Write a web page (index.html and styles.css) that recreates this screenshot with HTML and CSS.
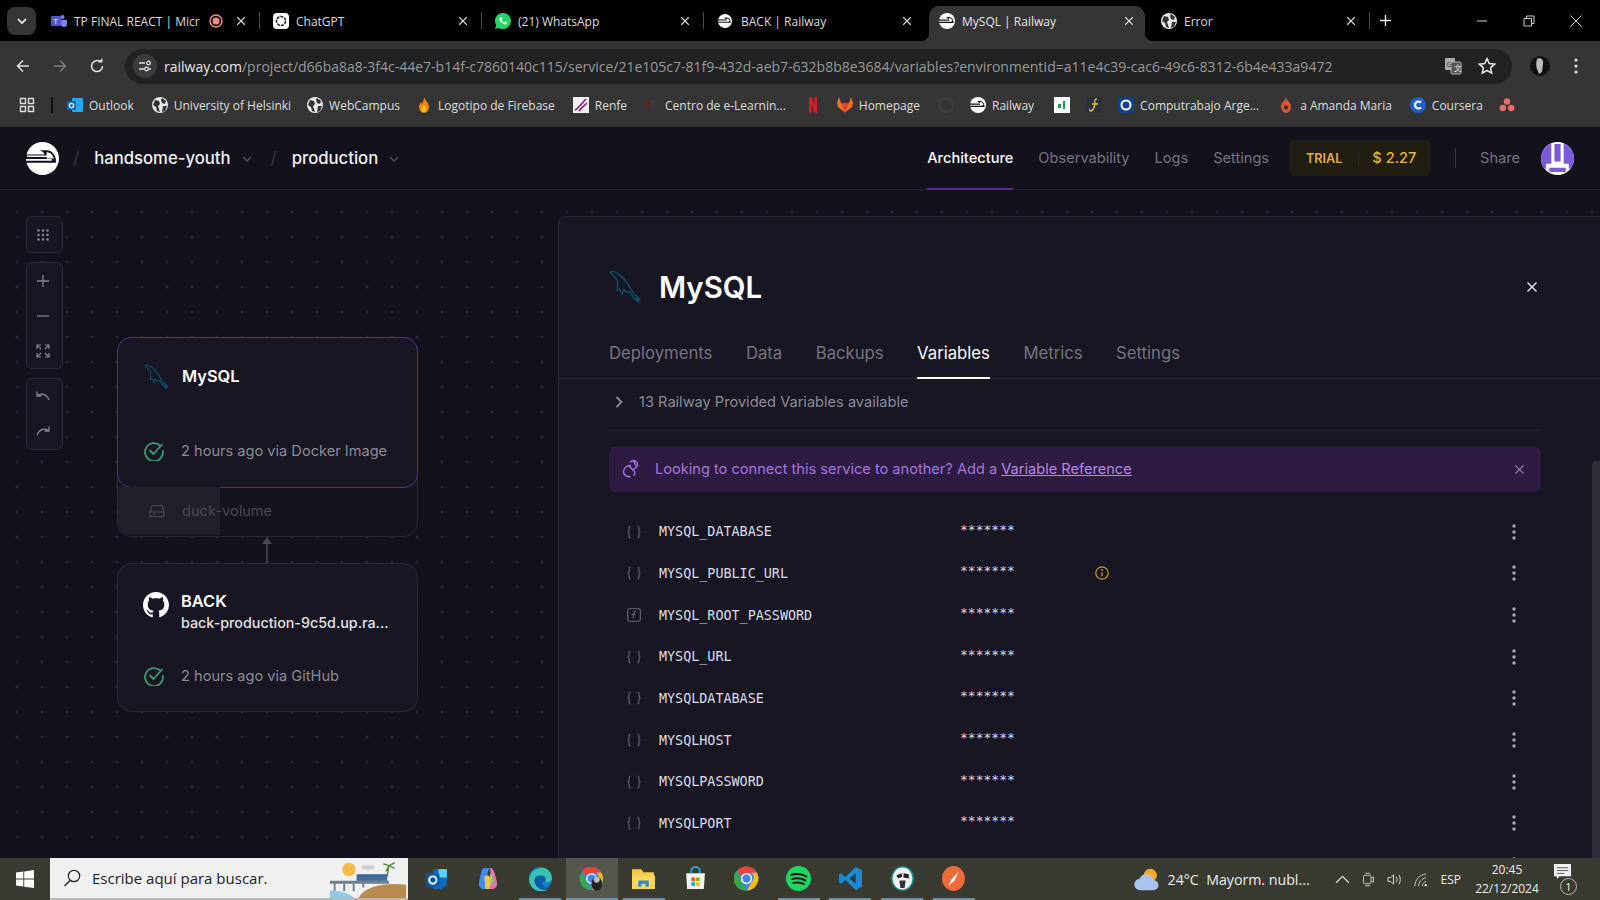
FILE: index.html
```html
<!DOCTYPE html>
<html lang="es">
<head>
    <meta charset="UTF-8">
    <title>MySQL | Railway</title>
    <link rel="stylesheet" href="styles.css">
</head>
<body>
    <svg class="sprites" width="0" height="0">
        <symbol id="globe" viewBox="0 0 16 16">
            <circle cx="8" cy="8" r="8" fill="#e8e8e8"/>
            <path d="M3 3l4 1 1 3-2 2 1 3 1 3-3-1-1-4-3-2zM10 1l4 3-1 3-3-1-1-3zM11 9l4 0-2 5-3 1z" fill="#333"/>
        </symbol>
        <symbol id="rail" viewBox="0 0 32 32">
            <circle cx="16" cy="16" r="16" fill="#fff"/>
            <path d="M0 12h18c-1-3-4-4-6-4h8c4 0 8 3 9 9v3H0z" fill="#13111c"/>
            <path d="M1 13h22v1.6H1zM0 16.5h25v1.6H0zM2 9.5h12v1.6H2z" fill="#fff"/>
            <path d="M20 10c3 0 6 2 7 6h-7z" fill="#fff"/>
        </symbol>
        <symbol id="dolphin" viewBox="0 0 26 26">
            <path d="M1 1.500c3-1.500 5 .5 7 2 3 2.500 5 5 7 8 2 3.500 3 6 5 7.500l4 4-3-1.500 2 3.500-4-3.500c-1-2-2-3.500-3.500-5-1.500 1-3 0-4-1.500l-1.500 3.500-2-4-1.500 1c-.5-3 .5-5 0-7C5 5.500 2.500 3.500 1 1.500z" fill="none" stroke="#0d4f6b" stroke-width="1.100"/>
        </symbol>
        <symbol id="check" viewBox="0 0 20 20">
            <path d="M16.500 4.800A9 9 0 1 0 19 10" fill="none" stroke="#3b9a70" stroke-width="1.800" stroke-linecap="round"/>
            <path d="M6 9.500l3.500 3.500L18 3.500" fill="none" stroke="#3b9a70" stroke-width="1.800" stroke-linecap="round" stroke-linejoin="round"/>
        </symbol>
        <symbol id="braces" viewBox="0 0 14 14">
            <path d="M3.500 1C2 1 2 2 2 3v2.500C2 6.500 1.500 7 .5 7c1 0 1.500.5 1.500 1.500V11c0 1 0 2 1.500 2M10.500 1C12 1 12 2 12 3v2.500c0 1 .5 1.500 1.500 1.500-1 0-1.500.5-1.500 1.500V11c0 1 0 2-1.500 2" fill="none" stroke="#6a6873" stroke-width="1.100"/>
        </symbol>
        <symbol id="dots" viewBox="0 0 4 16">
            <circle cx="2" cy="2" r="1.700" fill="#a9a7b0"/>
            <circle cx="2" cy="8" r="1.700" fill="#a9a7b0"/>
            <circle cx="2" cy="14" r="1.700" fill="#a9a7b0"/>
        </symbol>
        <symbol id="chev" viewBox="0 0 12 12">
            <path d="M2 4l4 4 4-4" fill="none" stroke="#55535e" stroke-width="1.300"/>
        </symbol>
        <symbol id="cross" viewBox="0 0 12 12">
            <path d="M1.500 1.500l9 9M10.500 1.500l-9 9" fill="none" stroke="currentColor" stroke-width="1.300"/>
        </symbol>
    </svg>

    <!-- browser chrome -->
    <div class="tabstrip">
        <div class="tab-menu"><svg width="12" height="12" viewBox="0 0 12 12"><path d="M2 4l4 4 4-4" fill="none" stroke="#fff" stroke-width="1.700"/></svg></div>
        <div class="tab">
            <svg class="fav" viewBox="0 0 16 16"><circle cx="11.500" cy="4" r="2" fill="#7b83eb"/><rect x="0" y="3" width="10" height="10" rx="1" fill="#5059c9"/><path d="M10 7h6v4a3 3 0 0 1-6 0z" fill="#7b83eb"/><text x="2.500" y="11" font-size="8" fill="#fff">T</text></svg>
            <span class="tab-title">TP FINAL REACT | Micr</span>
            <svg class="rec" viewBox="0 0 14 14"><circle cx="7" cy="7" r="6" fill="none" stroke="#f28b82" stroke-width="1.500"/><circle cx="7" cy="7" r="3.500" fill="#f28b82"/></svg>
            <svg class="tab-x"><use href="#cross"/></svg>
        </div>
        <div class="tab">
            <svg class="fav" viewBox="0 0 16 16"><rect width="16" height="16" rx="4" fill="#fff"/><circle cx="8" cy="8" r="4.500" fill="none" stroke="#222" stroke-width="1.600" stroke-dasharray="3 1"/></svg>
            <span class="tab-title">ChatGPT</span>
            <svg class="tab-x"><use href="#cross"/></svg>
        </div>
        <div class="tab">
            <svg class="fav" viewBox="0 0 16 16"><path d="M8 0a8 8 0 0 0-6.800 12.200L0 16l3.900-1.100A8 8 0 1 0 8 0z" fill="#25d366"/><path d="M5 4c-1 1-1 3 1 5s4 3 5.500 2l.5-1.500-2-1-1 1c-1-.5-2-1.500-2.500-2.500l1-1-1-2z" fill="#fff"/></svg>
            <span class="tab-title">(21) WhatsApp</span>
            <svg class="tab-x"><use href="#cross"/></svg>
        </div>
        <div class="tab">
            <svg class="fav fav-sm"><use href="#rail"/></svg>
            <span class="tab-title">BACK | Railway</span>
            <svg class="tab-x"><use href="#cross"/></svg>
        </div>
        <div class="tab tab-active">
            <svg class="fav"><use href="#rail"/></svg>
            <span class="tab-title">MySQL | Railway</span>
            <svg class="tab-x"><use href="#cross"/></svg>
        </div>
        <div class="tab">
            <svg class="fav"><use href="#globe"/></svg>
            <span class="tab-title">Error</span>
            <svg class="tab-x"><use href="#cross"/></svg>
        </div>
        <svg class="new-tab" viewBox="0 0 12 12"><path d="M6 0v12M0 6h12" stroke="#e8e8e8" stroke-width="1.500"/></svg>
        <div class="win-btns">
            <svg viewBox="0 0 12 12"><path d="M1 6h10" stroke="#ccc" stroke-width="1"/></svg>
            <svg viewBox="0 0 12 12"><path d="M1 3.500h7.500V11H1zM3.500 3.500V1H11v7.500H8.500" fill="none" stroke="#ccc" stroke-width="1"/></svg>
            <svg viewBox="0 0 12 12"><path d="M.5.500l11 11M11.500.500l-11 11" stroke="#ccc" stroke-width="1"/></svg>
        </div>
    </div>

    <div class="toolbar">
        <div class="nav-btn"><svg viewBox="0 0 16 16"><path d="M14 8H2.500M8 2.500L2.500 8 8 13.500" fill="none" stroke="#e3e3e3" stroke-width="1.500"/></svg></div>
        <div class="nav-btn"><svg viewBox="0 0 16 16"><path d="M2 8h11.500M8 2.500L13.500 8 8 13.500" fill="none" stroke="#7c7c7c" stroke-width="1.500"/></svg></div>
        <div class="nav-btn"><svg viewBox="0 0 16 16"><path d="M13.500 8A5.500 5.500 0 1 1 11.500 3.800" fill="none" stroke="#e3e3e3" stroke-width="1.500"/><path d="M9 4.500h4.500V0z" fill="#e3e3e3"/></svg></div>
        <div class="omnibox">
            <span class="site-chip"><svg viewBox="0 0 14 14"><path d="M1 4h6M11 10h2M1 10h5" stroke="#e3e3e3" stroke-width="1.300"/><circle cx="10.500" cy="4" r="1.800" fill="none" stroke="#e3e3e3" stroke-width="1.300"/><circle cx="8.500" cy="10" r="1.800" fill="none" stroke="#e3e3e3" stroke-width="1.300"/></svg></span>
            <span class="url"><b>railway.com</b>/project/d66ba8a8-3f4c-44e7-b14f-c7860140c115/service/21e105c7-81f9-432d-aeb7-632b8b8e3684/variables?environmentId=a11e4c39-cac6-49c6-8312-6b4e433a9472</span>
            <svg class="omni-icon" viewBox="0 0 18 18"><rect x="1" y="1" width="10" height="12" rx="1" fill="#aaa"/><rect x="7" y="5" width="10" height="12" rx="1" fill="#555" stroke="#ccc" stroke-width=".8"/><text x="2.500" y="10" font-size="7" fill="#333">G</text><text x="9.500" y="14" font-size="8" fill="#eee">文</text></svg>
            <svg class="omni-icon" viewBox="0 0 16 16"><path d="M8 1.500l2 4.300 4.700.6-3.500 3.200.9 4.700L8 12l-4.100 2.300.9-4.700L1.300 6.400 6 5.800z" fill="none" stroke="#e3e3e3" stroke-width="1.400"/></svg>
        </div>
        <svg class="profile" viewBox="0 0 20 20"><circle cx="10" cy="10" r="10" fill="#111"/><path d="M7 3c3-2 7 0 6 5l-1 8-3 2-2-5c-1-3-1-7 0-10z" fill="#bbb"/></svg>
        <svg class="menu-dots" viewBox="0 0 4 16"><circle cx="2" cy="2" r="1.600" fill="#e3e3e3"/><circle cx="2" cy="8" r="1.600" fill="#e3e3e3"/><circle cx="2" cy="14" r="1.600" fill="#e3e3e3"/></svg>
    </div>

    <div class="bookmarks">
        <svg class="bm-icon" viewBox="0 0 16 16"><path d="M1.500 1.500h5v5h-5zM9.500 1.500h5v5h-5zM1.500 9.500h5v5h-5zM9.500 9.500h5v5h-5z" fill="none" stroke="#ddd" stroke-width="1.400"/></svg>
        <span class="bm-sep"></span>
        <span class="bm bm-first"><svg class="bm-icon" viewBox="0 0 16 16"><rect x="5" y="1" width="11" height="14" rx="1" fill="#28a8ea"/><rect x="0" y="4" width="9" height="9" rx="1" fill="#0f6cbd"/><circle cx="4.500" cy="8.500" r="2.200" fill="none" stroke="#fff" stroke-width="1.200"/></svg>Outlook</span>
        <span class="bm bm-helsinki"><svg class="bm-icon"><use href="#globe"/></svg>University of Helsinki</span>
        <span class="bm"><svg class="bm-icon"><use href="#globe"/></svg>WebCampus</span>
        <span class="bm"><svg class="bm-icon" viewBox="0 0 16 16"><path d="M8 0c1 3 5 6 5 10a5 6 0 0 1-10 0c0-2 1-3 2-5l1 2c1-2 2-4 2-7z" fill="#f5820d"/><path d="M8 8c1 1 2.500 2.500 2.500 4a2.500 3 0 0 1-5 0c0-1.500 1.500-2.500 2.500-4z" fill="#ffc400"/></svg>Logotipo de Firebase</span>
        <span class="bm bm-renfe"><svg class="bm-icon" viewBox="0 0 16 16"><rect width="16" height="16" fill="#eee"/><path d="M2 13C6 11 9 6 13 2M6 14c2-3 5-5 8-8" stroke="#8a1a6b" stroke-width="1.500" fill="none"/></svg>Renfe</span>
        <span class="bm"><svg class="bm-icon" viewBox="0 0 16 16"><rect x="2" y="3" width="5" height="10" fill="#4a2a2a"/><rect x="8" y="3" width="5" height="10" fill="#3a3a3a"/></svg>Centro de e-Learnin...</span>
        <svg class="bm-icon bm-netflix" viewBox="0 0 16 16"><path d="M4 0h3l2.500 9V0H12v16l-3-.5L6.500 7v8.500L4 16z" fill="#d81f26"/></svg>
        <span class="bm"><svg class="bm-icon" viewBox="0 0 16 16"><path d="M8 15.500L1 10l-1-4 2-6 2 6h8l2-6 2 6-1 4z" fill="#fc6d26"/><path d="M8 15.500L4 6h8z" fill="#e24329"/></svg>Homepage</span>
        <svg class="bm-icon bm-github" viewBox="0 0 16 16"><circle cx="8" cy="8" r="7" fill="none" stroke="#3c3e42" stroke-width="2.500"/></svg>
        <span class="bm"><svg class="bm-icon"><use href="#rail"/></svg>Railway</span>
        <svg class="bm-icon bm-sheet" viewBox="0 0 16 16"><rect width="16" height="16" fill="#fff"/><path d="M4 7h3v4H4zM9 4h2v8H9z" fill="#1a9c52"/></svg>
        <svg class="bm-icon" viewBox="0 0 16 16"><rect width="16" height="16" fill="#2a2f3a"/><path d="M11 2C8 2 9 4 9 6c0 3-2 8-4 8-1 0-2-1-1-2M6 7h6" fill="none" stroke="#e8c23a" stroke-width="1.300"/></svg>
        <span class="bm"><svg class="bm-icon" viewBox="0 0 16 16"><rect width="16" height="16" rx="2" fill="#123e8a"/><circle cx="8" cy="8" r="4.500" fill="none" stroke="#fff" stroke-width="2"/></svg>Computrabajo Arge...</span>
        <span class="bm bm-amanda"><svg class="bm-icon" viewBox="0 0 16 16"><path d="M8 0c0 3 5 5 5 10a5 6 0 0 1-10 0c0-5 5-7 5-10z" fill="#e2552b"/><circle cx="8" cy="10.500" r="2.200" fill="#333"/></svg>a Amanda Maria</span>
        <span class="bm bm-coursera"><svg class="bm-icon" viewBox="0 0 16 16"><circle cx="8" cy="8" r="8" fill="#1a5fd0"/><path d="M11 5.500a3.500 3.500 0 1 0 0 5" fill="none" stroke="#fff" stroke-width="2.200"/></svg>Coursera</span>
        <svg class="bm-icon" viewBox="0 0 16 16"><circle cx="8" cy="4.500" r="3.200" fill="#f06a6a"/><circle cx="3.800" cy="11" r="3.200" fill="#f06a6a"/><circle cx="12.200" cy="11" r="3.200" fill="#f06a6a"/></svg>
    </div>

    <!-- railway app -->
    <header class="app-header">
        <svg class="logo"><use href="#rail"/></svg>
        <span class="slash">/</span>
        <span class="crumb">handsome-youth</span>
        <svg class="crumb-chev"><use href="#chev"/></svg>
        <span class="slash">/</span>
        <span class="crumb">production</span>
        <svg class="crumb-chev"><use href="#chev"/></svg>
        <nav class="top-nav">
            <a class="top-link active">Architecture</a>
            <a class="top-link">Observability</a>
            <a class="top-link">Logs</a>
            <a class="top-link">Settings</a>
        </nav>
        <div class="trial"><span class="trial-tag">TRIAL</span><span class="trial-cost">$ 2.27</span></div>
        <span class="head-sep"></span>
        <span class="share">Share</span>
        <svg class="avatar" viewBox="0 0 32 32">
            <clipPath id="avclip"><circle cx="16" cy="16" r="16"/></clipPath>
            <g clip-path="url(#avclip)">
                <rect width="32" height="32" fill="#fff"/>
                <path d="M0 0h10v21H5v5H0zM32 0H22v21h5v5h5zM13 2h6v17h-6zM8 25h16v4H8z" fill="#7b5bd6"/>
            </g>
        </svg>
    </header>

    <main class="canvas">
        <div class="canvas-tools">
            <div class="tool-group">
                <div class="tool"><svg viewBox="0 0 14 14"><g fill="#85838e"><circle cx="2.500" cy="2.500" r="1.300"/><circle cx="7" cy="2.500" r="1.300"/><circle cx="11.500" cy="2.500" r="1.300"/><circle cx="2.500" cy="7" r="1.300"/><circle cx="7" cy="7" r="1.300"/><circle cx="11.500" cy="7" r="1.300"/><circle cx="2.500" cy="11.500" r="1.300"/><circle cx="7" cy="11.500" r="1.300"/><circle cx="11.500" cy="11.500" r="1.300"/></g></svg></div>
            </div>
            <div class="tool-group">
                <div class="tool"><svg viewBox="0 0 14 14"><path d="M7 1v12M1 7h12" stroke="#85838e" stroke-width="1.300"/></svg></div>
                <div class="tool"><svg viewBox="0 0 14 14"><path d="M1 7h12" stroke="#85838e" stroke-width="1.300"/></svg></div>
                <div class="tool"><svg viewBox="0 0 14 14"><path d="M1 5V1h4M1 1l4 4M13 5V1H9M13 1L9 5M1 9v4h4M1 13l4-4M13 9v4H9M13 13L9 9" fill="none" stroke="#85838e" stroke-width="1.200"/></svg></div>
            </div>
            <div class="tool-group">
                <div class="tool"><svg viewBox="0 0 14 14"><path d="M1 1.500v4.500h4.500M1 6c3-3 9-3 12 4" fill="none" stroke="#85838e" stroke-width="1.300"/></svg></div>
                <div class="tool"><svg viewBox="0 0 14 14"><path d="M13 1.500v4.500H8.500M13 6C10 3 4 3 1 10" fill="none" stroke="#85838e" stroke-width="1.300"/></svg></div>
            </div>
        </div>

        <div class="node node-mysql">
            <div class="node-main">
                <div class="node-head">
                    <svg class="node-icon"><use href="#dolphin"/></svg>
                    <div class="node-title">MySQL</div>
                </div>
                <div class="node-status"><svg class="status-icon"><use href="#check"/></svg>2 hours ago via Docker Image</div>
            </div>
            <div class="node-volume">
                <span class="volume-used"></span>
                <svg class="volume-icon" viewBox="0 0 16 16"><path d="M1 9l2-6.500h10L15 9v3.500a1 1 0 0 1-1 1H2a1 1 0 0 1-1-1zM1 9h14M4 11.500h2" fill="none" stroke="#4d4b56" stroke-width="1.200"/></svg>
                <span class="volume-name">duck-volume</span>
            </div>
        </div>

        <svg class="edge" viewBox="0 0 14 26"><path d="M7 6v20" stroke="#4a4852" stroke-width="1.500"/><path d="M7 0l5 7H2z" fill="#4a4852"/></svg>

        <div class="node node-back">
            <div class="node-main">
                <div class="node-head">
                    <svg class="node-icon git-icon" viewBox="0 0 16 16"><path fill="#fff" d="M8 0C3.580 0 0 3.580 0 8c0 3.540 2.290 6.530 5.470 7.590.4.070.55-.17.55-.38 0-.19-.01-.82-.01-1.490-2.010.37-2.530-.49-2.690-.94-.09-.23-.48-.94-.82-1.130-.28-.15-.68-.52-.01-.53.630-.01 1.080.58 1.230.82.720 1.210 1.870.87 2.330.66.070-.52.280-.87.510-1.070-1.780-.2-3.640-.89-3.640-3.950 0-.87.310-1.590.820-2.150-.08-.2-.36-1.020.080-2.120 0 0 .67-.21 2.200.82.640-.18 1.320-.27 2-.27.680 0 1.360.09 2 .27 1.530-1.040 2.200-.82 2.200-.82.440 1.100.160 1.920.080 2.120.510.56.820 1.270.820 2.150 0 3.070-1.870 3.750-3.650 3.950.290.25.540.73.540 1.480 0 1.070-.01 1.930-.01 2.200 0 .21.150.46.550.38A8.013 8.013 0 0016 8c0-4.420-3.580-8-8-8z"/></svg>
                    <div>
                        <div class="node-title">BACK</div>
                        <div class="node-sub">back-production-9c5d.up.ra...</div>
                    </div>
                </div>
                <div class="node-status"><svg class="status-icon"><use href="#check"/></svg>2 hours ago via GitHub</div>
            </div>
        </div>

        <section class="panel">
            <div class="panel-title">
                <svg class="panel-icon"><use href="#dolphin"/></svg>
                <h1>MySQL</h1>
                <svg class="panel-close"><use href="#cross"/></svg>
            </div>
            <div class="panel-tabs">
                <a class="panel-tab">Deployments</a>
                <a class="panel-tab">Data</a>
                <a class="panel-tab">Backups</a>
                <a class="panel-tab active">Variables</a>
                <a class="panel-tab">Metrics</a>
                <a class="panel-tab">Settings</a>
            </div>
            <div class="panel-body">
                <div class="provided">
                    <svg class="provided-chev" viewBox="0 0 12 12"><path d="M3.500 1l5 5-5 5" fill="none" stroke="#8d8b95" stroke-width="1.800"/></svg>
                    13 Railway Provided Variables available
                </div>
                <div class="banner">
                    <svg class="banner-icon" viewBox="0 0 20 20"><path d="M10 6.500C7 6 3 8.500 2.500 12c-.5 3.500 3 6.500 7 5.500M9 3.500c1-2 4-2.500 6-1 2 1.500 2 4 .5 5.500l-3.500 3M8 7l5 5c1.500 1.500 1 3.500-.5 4.500M12 1l3 6" fill="none" stroke="#a46de0" stroke-width="1.500"/></svg>
                    <span>Looking to connect this service to another? Add a <a class="banner-link">Variable Reference</a></span>
                    <svg class="banner-close"><use href="#cross"/></svg>
                </div>
                <div class="var-list">
                    <div class="var-row"><svg class="var-icon"><use href="#braces"/></svg><span class="var-name">MYSQL_DATABASE</span><span class="var-value">*******</span><svg class="var-menu"><use href="#dots"/></svg></div>
                    <div class="var-row"><svg class="var-icon"><use href="#braces"/></svg><span class="var-name">MYSQL_PUBLIC_URL</span><span class="var-value">*******</span><svg class="var-info" viewBox="0 0 14 14"><circle cx="7" cy="7" r="6.200" fill="none" stroke="#c99a2e" stroke-width="1.200"/><path d="M7 6.200v4" stroke="#c99a2e" stroke-width="1.300"/><circle cx="7" cy="4" r=".9" fill="#c99a2e"/></svg><svg class="var-menu"><use href="#dots"/></svg></div>
                    <div class="var-row"><svg class="var-icon" viewBox="0 0 14 14"><rect x=".7" y=".7" width="12.600" height="12.600" rx="1.500" fill="none" stroke="#6a6873" stroke-width="1.100"/><path d="M9 3.500C7.500 3 7 4 6.800 5.500L6 10.500M4.800 6.500h3.600" fill="none" stroke="#6a6873" stroke-width="1.100"/></svg><span class="var-name">MYSQL_ROOT_PASSWORD</span><span class="var-value">*******</span><svg class="var-menu"><use href="#dots"/></svg></div>
                    <div class="var-row"><svg class="var-icon"><use href="#braces"/></svg><span class="var-name">MYSQL_URL</span><span class="var-value">*******</span><svg class="var-menu"><use href="#dots"/></svg></div>
                    <div class="var-row"><svg class="var-icon"><use href="#braces"/></svg><span class="var-name">MYSQLDATABASE</span><span class="var-value">*******</span><svg class="var-menu"><use href="#dots"/></svg></div>
                    <div class="var-row"><svg class="var-icon"><use href="#braces"/></svg><span class="var-name">MYSQLHOST</span><span class="var-value">*******</span><svg class="var-menu"><use href="#dots"/></svg></div>
                    <div class="var-row"><svg class="var-icon"><use href="#braces"/></svg><span class="var-name">MYSQLPASSWORD</span><span class="var-value">*******</span><svg class="var-menu"><use href="#dots"/></svg></div>
                    <div class="var-row"><svg class="var-icon"><use href="#braces"/></svg><span class="var-name">MYSQLPORT</span><span class="var-value">*******</span><svg class="var-menu"><use href="#dots"/></svg></div>
                    <div class="var-row"><svg class="var-icon"><use href="#braces"/></svg><svg class="var-menu"><use href="#dots"/></svg></div>
                </div>
            </div>
            <span class="scroll-thumb"></span>
        </section>
    </main>

    <!-- windows taskbar -->
    <footer class="taskbar">
        <div class="start"><svg viewBox="0 0 16 16"><path d="M0 2.300l6.500-.9v6.200H0zM7.300 1.300L16 0v7.600H7.300zM0 8.400h6.500v6.200L0 13.700zM7.300 8.400H16V16l-8.700-1.200z" fill="#fff"/></svg></div>
        <div class="search">
            <svg class="search-icon" viewBox="0 0 18 18"><circle cx="11" cy="7" r="5.700" fill="none" stroke="#222" stroke-width="1.200"/><path d="M7 11.500L1.500 17" stroke="#222" stroke-width="1.200"/></svg>
            <span class="search-text">Escribe aquí para buscar.</span>
            <svg class="search-art" viewBox="0 0 80 42"><circle cx="20" cy="12" r="7" fill="#f5b94a"/><ellipse cx="40" cy="10" rx="7" ry="2.500" fill="#c9d0d6"/><path d="M60 20l2-12M62 8l-6-2M62 8l6-3M62 8l-3 6M62 8l6 3" stroke="#5f8a3a" stroke-width="1.500"/><path d="M30 42c8-14 30-16 50-14v14z" fill="#b98a4e"/><path d="M0 24h62v3H0zM4 27h2v8H4zM14 27h2v8h-2zM24 27h2v8h-2zM34 27h2v4h-2z" fill="#6f7f8a"/><path d="M28 17h32v7H28z" fill="#3f6c9a"/><path d="M0 34c10 0 18 2 26 8H0z" fill="#8ecae6"/></svg>
        </div>
        <div class="apps">
            <div class="app"><svg viewBox="0 0 24 24"><path d="M9 3h13v15l-5 4H9z" fill="#0f6cbd"/><path d="M14 3h8v8h-8z" fill="#50d9ff"/><rect x="2" y="7" width="13" height="13" rx="2" fill="#0a5aa8"/><circle cx="8.500" cy="13.500" r="3.500" fill="none" stroke="#fff" stroke-width="1.800"/></svg></div>
            <div class="app"><svg viewBox="0 0 24 24"><path d="M8 2h5c-3 5-3 14 0 20H8c-4 0-6-3-5-7l2-9c.5-2 1.500-4 3-4z" fill="#3b8ef0"/><path d="M13 2c3 0 4 2 5 5l2 8c1 4-1 7-5 7h-3c3-6 3-14 1-20z" fill="#e86fb0"/><path d="M8 10c3-2 6 0 7 4l-2 8H9z" fill="#f5c242"/><path d="M14 6l3 8-3 5c-1-4-1-9 0-13z" fill="#8ed16f"/></svg></div>
            <div class="app app-line"><svg viewBox="0 0 24 24"><circle cx="12" cy="12" r="11" fill="#0c7fd0"/><path d="M1 12C2 5 9 1 15 2c5 1 8 5 8 10 0 3-4 4-7 3 2-2 1-6-4-6-5 0-7 4-5 8 2 5 8 7 12 5-3 3-8 3-12 1-4-2-6-6-6-11z" fill="#37c2b1"/><path d="M12 9c-5 0-7 4-5 8 2 5 8 7 12 5 1-1-6-2-6-6 0-1 2-1 3-1 2-2 1-6-4-6z" fill="#0c5aa8"/></svg></div>
            <div class="app app-active"><svg viewBox="0 0 24 24"><circle cx="12" cy="12" r="11" fill="#4285f4"/><path d="M12 1a11 11 0 0 1 9.500 5.500H12a5.500 5.500 0 0 0-5 3L3 4a11 11 0 0 1 9-3z" fill="#ea4335"/><path d="M2.800 5.500L7.500 14.500 12.500 23A11 11 0 0 1 2.800 5.500z" fill="#34a853"/><path d="M21.500 6.500A11 11 0 0 1 12.500 23l4.500-8a5.500 5.500 0 0 0 0-8.500z" fill="#fbbc04"/><circle cx="12" cy="12" r="4.500" fill="#4285f4" stroke="#fff" stroke-width="1.300"/><ellipse cx="17" cy="17" rx="5" ry="7" fill="#222"/><circle cx="17" cy="13" r="3" fill="#bbb"/></svg></div>
            <div class="app app-line"><svg viewBox="0 0 24 24"><path d="M1 3h9l2 3h10v16H1z" fill="#f7c94b"/><path d="M1 9h22v13H1z" fill="#fbd75b"/><path d="M7 20v-6h10v6h-3v-3h-4v3z" fill="#2b8ad6"/></svg></div>
            <div class="app"><svg viewBox="0 0 24 24"><path d="M3 7h18l-1 15H4z" fill="#f4f4f4"/><path d="M8 7V4a4 3 0 0 1 8 0v3" fill="none" stroke="#2aa0d8" stroke-width="1.800"/><path d="M8 11h3.500v3.500H8z" fill="#f25022"/><path d="M12.500 11H16v3.500h-3.500z" fill="#7fba00"/><path d="M8 15.500h3.500V19H8z" fill="#00a4ef"/><path d="M12.500 15.500H16V19h-3.500z" fill="#ffb900"/></svg></div>
            <div class="app"><svg viewBox="0 0 24 24"><circle cx="12" cy="12" r="11.500" fill="#4285f4"/><path d="M12 .5A11.500 11.500 0 0 1 22 6.500H12a5.500 5.500 0 0 0-5 3L3 4A11.500 11.500 0 0 1 12 .5z" fill="#ea4335"/><path d="M3 4l4.500 10.500 5 9A11.500 11.500 0 0 1 3 4z" fill="#34a853"/><path d="M22 6.500a11.500 11.500 0 0 1-9.500 17l4.500-8.500a5.500 5.500 0 0 0 0-8.500z" fill="#fbbc04"/><circle cx="12" cy="12" r="4.700" fill="#4285f4" stroke="#fff" stroke-width="1.300"/></svg></div>
            <div class="app app-line"><svg viewBox="0 0 24 24"><circle cx="12" cy="12" r="12" fill="#1ed760"/><path d="M5 8.500c5-1.500 10-1 14.500 1.500M6 12.500c4-1 9-.8 12.500 1.300M7 16.200c3.500-.8 7-.5 10 1" fill="none" stroke="#111" stroke-width="1.900" stroke-linecap="round"/></svg></div>
            <div class="app app-line"><svg viewBox="0 0 24 24"><path d="M17 1l6 3v16l-6 3L7 13.500 3 17l-2-1V8l2-1 4 3.500zM17 7l-6 5 6 5z" fill="#1a8ad4"/></svg></div>
            <div class="app app-line"><svg viewBox="0 0 24 24"><ellipse cx="12" cy="12" rx="11" ry="12" fill="#1b8c8c"/><ellipse cx="12" cy="12" rx="9.500" ry="10.500" fill="#f0f0f0"/><path d="M6 9l5-2 1 3-4 2zM13 7l5 1v4l-5-1z" fill="#222"/><path d="M9 14h6l-1 7h-4z" fill="#333"/></svg></div>
            <div class="app app-line"><svg viewBox="0 0 24 24"><ellipse cx="12" cy="12" rx="11" ry="12" fill="#f26b3a"/><path d="M7 19l3-6 7-8-4 9z" fill="#fff"/></svg></div>
        </div>
        <div class="tray">
            <svg class="weather" viewBox="0 0 34 30"><circle cx="21" cy="10" r="8" fill="#f5a623"/><path d="M9 28a7 7 0 0 1-1-14 9 9 0 0 1 17 2 6 6 0 0 1 0 12z" fill="#a8c4ea"/></svg>
            <span class="weather-text">24°C&nbsp; Mayorm. nubl...</span>
            <svg class="tray-icon tray-caret" viewBox="0 0 14 14"><path d="M1 10l6-6 6 6" fill="none" stroke="#ddd" stroke-width="1.100"/></svg>
            <svg class="tray-icon" viewBox="0 0 14 18"><rect x="1" y="4" width="9" height="10" rx="1.500" fill="none" stroke="#ddd"/><path d="M10 7l3-1v6l-3-1M3 1.500h6M3 16.500h6" fill="none" stroke="#ddd"/></svg>
            <svg class="tray-icon" viewBox="0 0 16 16"><path d="M1 6h3l3-3v10l-3-3H1zM10 5c1 2 1 4 0 6M13 3c1.500 3 1.500 7 0 10" fill="none" stroke="#ddd"/></svg>
            <svg class="tray-icon" viewBox="0 0 16 16"><path d="M2 15c0-7 5-12 12-13M6 15c0-4 3-8 8-9M10 15c0-2 1-4 4-5" fill="none" stroke="#ccc"/><circle cx="13.500" cy="14" r="1.300" fill="#ddd"/></svg>
            <span class="tray-lang">ESP</span>
            <div class="clock"><span>20:45</span><span>22/12/2024</span></div>
            <div class="notif">
                <svg viewBox="0 0 18 16"><path d="M0 0h18v13H6l-3 3v-3H0z" fill="#f0f0f0"/><path d="M3 4h12M3 7h12M3 10h8" stroke="#555"/></svg>
                <span class="notif-count">1</span>
            </div>
        </div>
    </footer>
</body>
</html>
```

FILE: styles.css
```css
* {
    box-sizing: border-box;
}

html, body {
    margin: 0;
    padding: 0;
}

body {
    width: 1600px;
    height: 900px;
    overflow: hidden;
    display: flex;
    flex-direction: column;
    font-family: 'Inter', 'Liberation Sans', sans-serif;
    background: #13111c;
}

svg {
    display: block;
    flex-shrink: 0;
}

.sprites {
    position: absolute;
}

/* browser tabs */
.tabstrip {
    height: 41px;
    background: #000;
    display: flex;
    align-items: flex-end;
    font-family: 'Open Sans', 'Liberation Sans', sans-serif;
    font-size: 12px;
    color: #dcdcdc;
}

.tab-menu {
    width: 29px;
    height: 28px;
    margin: 0 2px 6px 7px;
    border-radius: 8px;
    background: #353535;
    display: flex;
    align-items: center;
    justify-content: center;
}

.tab {
    width: 222px;
    height: 35px;
    padding: 0 14.5px 5px 13px;
    display: flex;
    align-items: center;
    position: relative;
}

.tab::after {
    content: '';
    position: absolute;
    right: 0;
    top: 6px;
    height: 17px;
    width: 1px;
    background: #4a4a4a;
}

.tab-active {
    width: 216px;
    margin: 0 3px;
    padding: 0 11.5px 5px 10px;
    background: #353535;
    border-radius: 10px 10px 0 0;
    color: #e6e6e6;
}

.tab-active::before {
    content: '';
    position: absolute;
    left: -8px;
    right: -8px;
    bottom: 0;
    height: 8px;
    background:
        radial-gradient(circle at 0 0, #000 8px, #353535 8.5px) left bottom / 8px 8px no-repeat,
        radial-gradient(circle at 100% 0, #000 8px, #353535 8.5px) right bottom / 8px 8px no-repeat;
}

.tab-active::after,
.tab:nth-of-type(5)::after {
    display: none;
}

.fav {
    width: 16px;
    height: 16px;
    margin-right: 7px;
}

.fav-sm {
    width: 14px;
    height: 14px;
    margin: 0 9px 0 1px;
}

.tab-title {
    flex: 1;
    white-space: nowrap;
    overflow: hidden;
}

.rec {
    width: 14px;
    height: 14px;
    margin: 0 13px 0 6px;
}

.tab-x {
    width: 10px;
    height: 10px;
    color: #e0e0e0;
}

.new-tab {
    width: 11px;
    height: 11px;
    margin: 0 0 15px 10px;
}

.win-btns {
    margin-left: auto;
    height: 41px;
    display: flex;
    align-items: center;
    gap: 35px;
    padding-right: 18px;
}

.win-btns svg {
    width: 12px;
    height: 12px;
}

/* address bar */
.toolbar {
    height: 43px;
    background: #353535;
    display: flex;
    align-items: center;
    padding: 7px 0 0 4px;
}

.nav-btn {
    width: 37px;
    display: flex;
    justify-content: center;
}

.nav-btn svg {
    width: 16px;
    height: 16px;
}

.omnibox {
    width: 1387px;
    height: 35px;
    margin-left: 10px;
    border-radius: 18px;
    background: #212224;
    display: flex;
    align-items: center;
    padding: 0 16px 0 8px;
    font-family: 'Open Sans', 'Liberation Sans', sans-serif;
    font-size: 14px;
    color: #9a9a9a;
    white-space: nowrap;
}

.site-chip {
    width: 24px;
    height: 24px;
    border-radius: 50%;
    background: #3a3b3d;
    display: flex;
    align-items: center;
    justify-content: center;
    margin-right: 7px;
}

.site-chip svg {
    width: 14px;
    height: 14px;
}

.url {
    flex: 1;
}

.url b {
    font-weight: 400;
    color: #e8e8e8;
}

.omni-icon {
    width: 18px;
    height: 18px;
    margin-left: 16px;
}

.profile {
    width: 20px;
    height: 20px;
    margin-left: 18px;
}

.menu-dots {
    width: 4px;
    height: 16px;
    margin-left: 24px;
}

/* bookmarks */
.bookmarks {
    height: 42px;
    background: #353535;
    display: flex;
    align-items: center;
    gap: 16px;
    padding-left: 19px;
    font-family: 'Open Sans', 'Liberation Sans', sans-serif;
    font-size: 12px;
    color: #dedede;
    white-space: nowrap;
}

.bm {
    display: flex;
    align-items: center;
    gap: 6px;
}

.bm-first {
    margin-left: -2px;
}

.bm-helsinki {
    margin-left: 2px;
}

.bm-renfe {
    margin-left: 2px;
}

.bm-netflix {
    margin-left: 3px;
}

.bm-github {
    margin-left: 2px;
}

.bm-sheet {
    margin-left: 4px;
}

.bm-amanda {
    margin-left: 3px;
}

.bm-coursera {
    margin-left: 2px;
}

.bm-icon {
    width: 16px;
    height: 16px;
}

.bm-sep {
    width: 2px;
    height: 16px;
    background: #111;
}

/* app header */
.app-header {
    height: 64px;
    padding: 0 26px;
    background: #13111c;
    border-top: 1px solid #2a2933;
    border-bottom: 1px solid #24222e;
    display: flex;
    align-items: center;
    color: #fff;
}

.logo {
    width: 33px;
    height: 33px;
}

.slash {
    color: #3a3843;
    font-size: 17px;
    margin: 0 15px 0 14px;
}

.crumb {
    font-size: 16.7px;
    font-weight: 500;
    color: #f2f2f4;
}

.crumb-chev {
    width: 12px;
    height: 12px;
    margin: 2px 4px 0 10px;
}

.top-nav {
    display: flex;
    align-self: stretch;
    margin-left: auto;
    gap: 25px;
    margin-right: 20px;
}

.top-link {
    font-size: 14.6px;
    color: #76747f;
    display: flex;
    align-items: center;
    border-bottom: 2px solid transparent;
    margin-bottom: -1px;
}

.top-link.active {
    color: #fff;
    font-weight: 500;
    border-bottom-color: #5b2a8c;
}

.trial {
    width: 142px;
    height: 36px;
    background: #221d12;
    border-radius: 6px;
    display: flex;
    align-items: center;
    font-size: 12.6px;
    color: #e2b23e;
}

.trial-tag {
    font-weight: 600;
    padding: 0 16px 0 17px;
    border-right: 1px solid #33291a;
}

.trial-cost {
    font-size: 14.6px;
    font-weight: 500;
    padding-left: 13px;
}

.head-sep {
    width: 1px;
    height: 20px;
    background: #3a3843;
    margin: 0 24px;
}

.share {
    font-size: 14.6px;
    color: #76747f;
}

.avatar {
    width: 33px;
    height: 33px;
    margin-left: 21px;
}

/* canvas */
.canvas {
    flex: 1;
    position: relative;
    overflow: hidden;
    background-color: #13111c;
    background-image: radial-gradient(circle, #2e2c38 1px, transparent 1.3px);
    background-size: 25px 25px;
    background-position: 4.5px 9.5px;
}

.canvas-tools {
    position: absolute;
    left: 26px;
    top: 26px;
    width: 37px;
    display: flex;
    flex-direction: column;
    gap: 9px;
}

.tool-group {
    background: #181622;
    border: 1px solid #2c2a38;
    border-radius: 6px;
}

.tool {
    height: 35px;
    padding-right: 3px;
    display: flex;
    align-items: center;
    justify-content: center;
}

.tool svg {
    width: 14px;
    height: 14px;
}

.node {
    position: absolute;
    left: 117px;
    width: 301px;
    border-radius: 14px;
    background: #181622;
    border: 1px solid #2a2836;
    color: #fff;
}

.node-mysql {
    top: 147px;
    height: 200px;
    background: #15131e;
}

.node-back {
    top: 373px;
    height: 149px;
}

.node-main {
    height: 100%;
    padding: 26px 0 23px 26px;
    display: flex;
    flex-direction: column;
    justify-content: space-between;
}

.node-mysql .node-main {
    height: 151px;
    margin: -1px;
    width: 301px;
    background: #181622;
    border: 1px solid #54308a;
    border-radius: 14px;
    position: relative;
    padding: 26px 0 24px 26px;
}

.node-head {
    display: flex;
    gap: 11px;
}

.node-mysql .node-head {
    gap: 12px;
}

.node-icon {
    width: 26px;
    height: 26px;
}

.git-icon {
    margin: 2px 1px 0 -1px;
}

.node-title {
    font-size: 16.4px;
    font-weight: 600;
    line-height: 24px;
}

.node-back .node-title {
    line-height: 22px;
}

.node-sub {
    font-size: 14.3px;
    font-weight: 500;
    line-height: 22px;
    color: #e4e3e8;
    white-space: nowrap;
}

.node-status {
    display: flex;
    align-items: center;
    gap: 17px;
    font-size: 14.6px;
    line-height: 24px;
    color: #8d8b95;
    white-space: nowrap;
}

.status-icon {
    width: 20px;
    height: 20px;
}

.node-volume {
    height: 48px;
    margin-top: -1px;
    position: relative;
    display: flex;
    align-items: center;
    padding-left: 31px;
    font-size: 14.6px;
    color: #494751;
}

.volume-used {
    position: absolute;
    left: 0;
    top: 0;
    bottom: 0;
    width: 102px;
    background: #211f2a;
    border-radius: 0 0 0 13px;
}

.volume-icon {
    width: 16px;
    height: 16px;
    position: relative;
}

.volume-name {
    position: relative;
    margin-left: 17px;
}

.edge {
    position: absolute;
    left: 260px;
    top: 347px;
    width: 14px;
    height: 26px;
}

/* service panel */
.panel {
    position: absolute;
    left: 558px;
    top: 26px;
    right: 0;
    bottom: -20px;
    background: #181622;
    border: 1px solid #2c2a38;
    border-width: 1px 0 0 1px;
    border-radius: 8px 0 0 0;
    overflow: hidden;
    color: #fff;
}

.panel-title {
    height: 42px;
    margin-top: 50px;
    padding: 0 62px 0 50px;
    display: flex;
    align-items: center;
}

.panel-icon {
    width: 34px;
    height: 34px;
    margin-top: -2px;
}

.panel-title h1 {
    margin: 0 0 0 16px;
    font-size: 29.4px;
    font-weight: 600;
    line-height: 42px;
}

.panel-close {
    width: 12px;
    height: 12px;
    margin: -2px 0 0 auto;
    color: #f0f0f0;
}

.panel-tabs {
    height: 44px;
    margin-top: 26px;
    padding-left: 50px;
    display: flex;
    gap: 33.5px;
    border-bottom: 1px solid #2c2a38;
}

.panel-tab {
    height: 44px;
    padding-top: 6px;
    font-size: 16.7px;
    line-height: 24px;
    color: #76747f;
}

.panel-tab.active {
    color: #fff;
    border-bottom: 2px solid #fff;
}

.panel-body {
    padding: 0 59px 0 50px;
}

.provided {
    height: 52px;
    padding-top: 11px;
    border-bottom: 1px solid #211f2b;
    display: flex;
    align-items: flex-start;
    gap: 14px;
    font-size: 14.6px;
    line-height: 24px;
    color: #8d8b95;
}

.provided-chev {
    width: 12px;
    height: 12px;
    margin: 6px 0 0 4px;
}

.banner {
    height: 45px;
    margin-top: 16px;
    padding: 0 16px 1px 12px;
    background: #2d1b42;
    border-radius: 6px;
    display: flex;
    align-items: center;
    font-size: 14.6px;
    color: #a675dd;
}

.banner-icon {
    width: 20px;
    height: 20px;
    margin-right: 14px;
}

.banner-link {
    color: #b487e8;
    text-decoration: underline;
}

.banner-close {
    width: 11px;
    height: 11px;
    margin-left: auto;
    color: #8f8a9a;
}

.var-list {
    margin-top: 19px;
}

.var-row {
    height: 41.67px;
    display: flex;
    align-items: center;
    padding: 0 25px 0 18px;
    font-family: 'DejaVu Sans Mono', 'Liberation Mono', monospace;
    color: #dddce2;
}

.var-icon {
    width: 14px;
    height: 14px;
    margin-right: 18px;
}

.var-name {
    width: 301px;
    font-size: 13.4px;
}

.var-value {
    width: 135px;
    font-size: 13px;
    margin-top: -5px;
}

.var-info {
    width: 14px;
    height: 14px;
}

.var-menu {
    width: 4px;
    height: 16px;
    margin-left: auto;
}

.scroll-thumb {
    position: absolute;
    right: 0;
    top: 244px;
    bottom: 0;
    width: 8px;
    background: #302e38;
    border-radius: 4px 0 0 0;
}

/* taskbar */
.taskbar {
    height: 42px;
    background: #393b30;
    display: flex;
    align-items: stretch;
    font-family: 'Open Sans', 'Liberation Sans', sans-serif;
    color: #eee;
}

.start {
    width: 50px;
    display: flex;
    align-items: center;
    justify-content: center;
}

.start svg {
    width: 18px;
    height: 18px;
}

.search {
    width: 358px;
    background: #f0f0f0;
    display: flex;
    align-items: center;
    padding-left: 13px;
    color: #222;
    font-size: 15px;
    border-bottom: 2px solid #b8b8b8;
}

.search-icon {
    width: 18px;
    height: 18px;
}

.search-text {
    margin-left: 11px;
}

.search-art {
    width: 80px;
    height: 40px;
    margin-left: auto;
}

.apps {
    display: flex;
    margin-left: 3px;
}

.app {
    width: 51.7px;
    padding-bottom: 2px;
    display: flex;
    align-items: center;
    justify-content: center;
}

.app svg {
    width: 25px;
    height: 25px;
}

.app-line {
    background: linear-gradient(#5e95b8, #5e95b8) center bottom / 42px 2px no-repeat;
}

.app-active {
    background: linear-gradient(#5e95b8, #5e95b8) center bottom / 100% 2px no-repeat, #55574e;
}

.tray {
    margin-left: auto;
    display: flex;
    align-items: center;
    gap: 11px;
    padding-right: 23px;
    font-size: 14px;
}

.weather {
    width: 28px;
    height: 25px;
    margin-right: -4px;
}

.weather-text {
    font-size: 14.2px;
    width: 138px;
    white-space: nowrap;
}

.tray-icon {
    width: 15px;
    height: 15px;
}

.tray-caret {
    margin-left: 18px;
}

.tray-lang {
    font-size: 12px;
    margin-left: 2px;
}

.clock {
    width: 70px;
    display: flex;
    flex-direction: column;
    align-items: center;
    font-size: 12px;
    line-height: 19px;
}

.notif {
    width: 24px;
    height: 32px;
    position: relative;
}

.notif svg {
    width: 17px;
    height: 17px;
    margin-left: 1px;
}

.notif-count {
    position: absolute;
    right: 0;
    bottom: 0;
    width: 17px;
    height: 17px;
    border: 1px solid #bbb;
    border-radius: 50%;
    background: #393b30;
    font-size: 11px;
    line-height: 15px;
    text-align: center;
}
```
